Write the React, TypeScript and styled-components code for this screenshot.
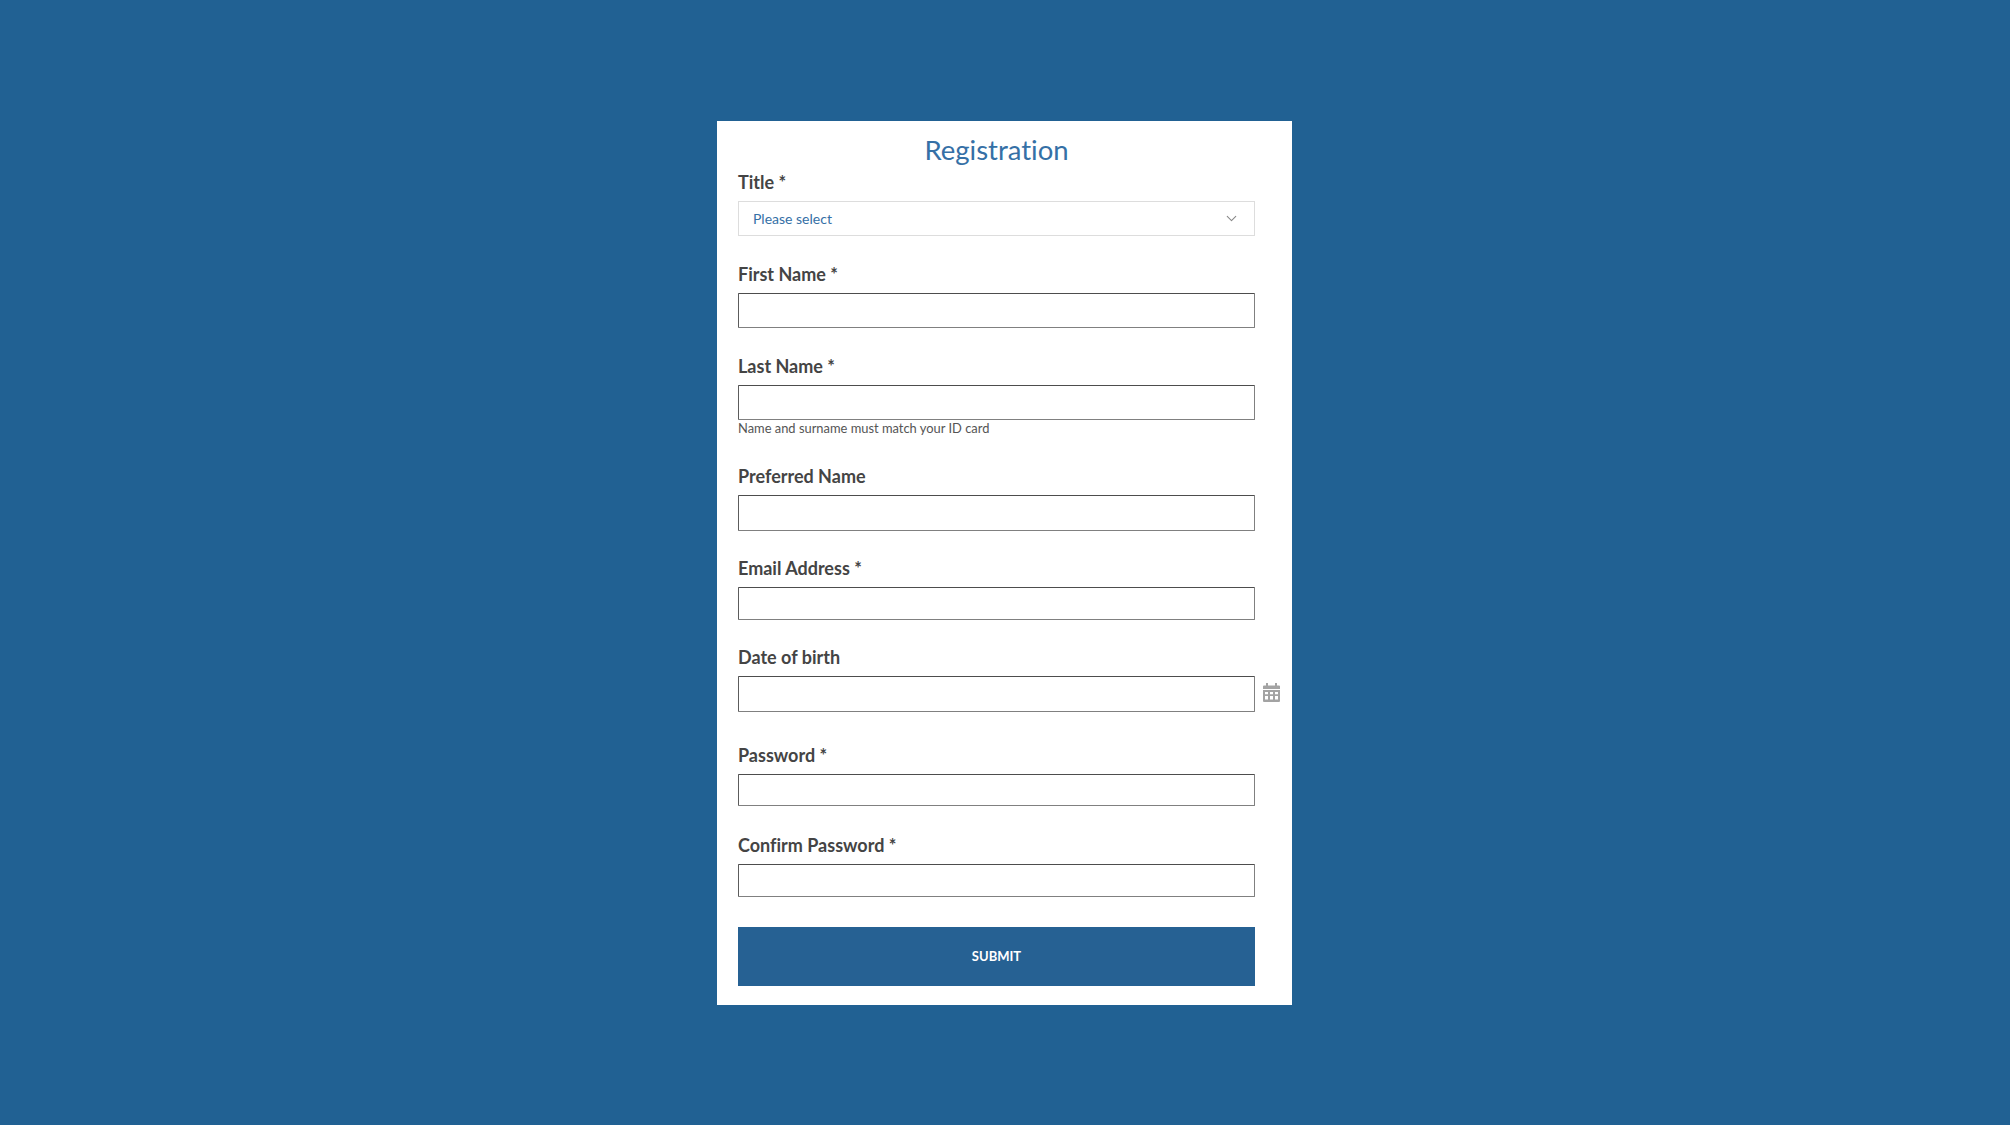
import React from "react";
import styled, { createGlobalStyle } from "styled-components";
import { ChevronDown } from "lucide-react";

const Global = createGlobalStyle`
  html, body { margin: 0; padding: 0; }
  body {
    background: #216193;
    font-family: "Lato", "Liberation Sans", sans-serif;
    font-variant-ligatures: none;
  }
`;

const Page = styled.main`
  box-sizing: border-box;
  min-height: 100vh;
  padding-right: 2px;
  display: flex;
  align-items: center;
  justify-content: center;
`;

const Card = styled.form`
  box-sizing: border-box;
  width: 575px;
  height: 884px;
  padding: 0 12px 0 21.5px;
  background: #ffffff;
  display: flex;
  flex-direction: column;
`;

const Heading = styled.h1`
  width: 517px;
  height: 50px;
  margin: 0;
  font-size: 27.5px;
  font-weight: 400;
  line-height: 58px;
  text-align: center;
  color: #3570a6;
`;

const Field = styled.div<{ $gap: number }>`
  display: grid;
  grid-template-columns: 517px 25px;
  column-gap: 8px;
  align-items: center;
  margin-bottom: ${(p) => p.$gap}px;
`;

const Label = styled.label`
  grid-column: 1 / -1;
  height: 24px;
  margin-bottom: 6px;
  font-size: 18px;
  font-weight: 700;
  line-height: 23px;
  color: #444444;
`;

const Input = styled.input<{ $h: number }>`
  box-sizing: border-box;
  width: 517px;
  height: ${(p) => p.$h}px;
  padding: 0 12px;
  background: #fff;
  border: 1px solid #808080;
  border-top-color: #4d4d4d;
  border-left-color: #5c5c5c;
  border-radius: 1px;
  outline: none;
`;

const Select = styled.div`
  box-sizing: border-box;
  width: 517px;
  height: 35px;
  padding: 0 14px;
  display: flex;
  align-items: center;
  justify-content: space-between;
  border: 1px solid #dddddd;
  font-size: 14px;
  color: #3570a6;
`;

const Hint = styled.small`
  grid-column: 1 / -1;
  height: 18px;
  font-size: 12.9px;
  line-height: 16px;
  color: #555555;
`;

const Submit = styled.button`
  width: 517px;
  height: 59.5px;
  padding: 0;
  border: none;
  background: #266193;
  color: #ffffff;
  font-family: inherit;
  font-size: 13px;
  font-weight: 700;
`;

const CalendarSvg = styled.svg`
  margin-top: -3px;
`;

const CalendarIcon = () => (
  <CalendarSvg width="17" height="19" viewBox="0 0 17 19" fill="#a3a3a3" aria-hidden="true">
    <rect x="3" y="0" width="2" height="4" />
    <rect x="12" y="0" width="2" height="4" />
    <path d="M0 3.5a1 1 0 0 1 1-1h15a1 1 0 0 1 1 1V6H0z" />
    <path
      fillRule="evenodd"
      d="M0 7h17v11a1 1 0 0 1-1 1H1a1 1 0 0 1-1-1zM2 9v2.2h3V9zm5 0v2.2h3V9zm5 0v2.2h3V9zM2 13v3.5h3V13zm5 0v3.5h3V13zm5 0v3.5h3V13z"
    />
  </CalendarSvg>
);

const fields = [
  { label: "First Name *", h: 35, gap: 27 },
  { label: "Last Name *", h: 35, hint: "Name and surname must match your ID card", gap: 27 },
  { label: "Preferred Name", h: 36, gap: 26 },
  { label: "Email Address *", h: 33, gap: 26 },
  { label: "Date of birth", h: 36, icon: true, gap: 32 },
  { label: "Password *", h: 32, gap: 28 },
  { label: "Confirm Password *", h: 33, gap: 30 },
];

export default function App() {
  return (
    <Page>
      <Global />
      <Card>
        <Heading>Registration</Heading>
        <Field $gap={27}>
          <Label>Title *</Label>
          <Select>
            Please select
            <ChevronDown size={17} color="#888" strokeWidth={1.5} />
          </Select>
        </Field>
        {fields.map((f) => (
          <Field key={f.label} $gap={f.gap}>
            <Label>{f.label}</Label>
            <Input $h={f.h} />
            {f.icon && <CalendarIcon />}
            {f.hint && <Hint>{f.hint}</Hint>}
          </Field>
        ))}
        <Submit type="button">SUBMIT</Submit>
      </Card>
    </Page>
  );
}
